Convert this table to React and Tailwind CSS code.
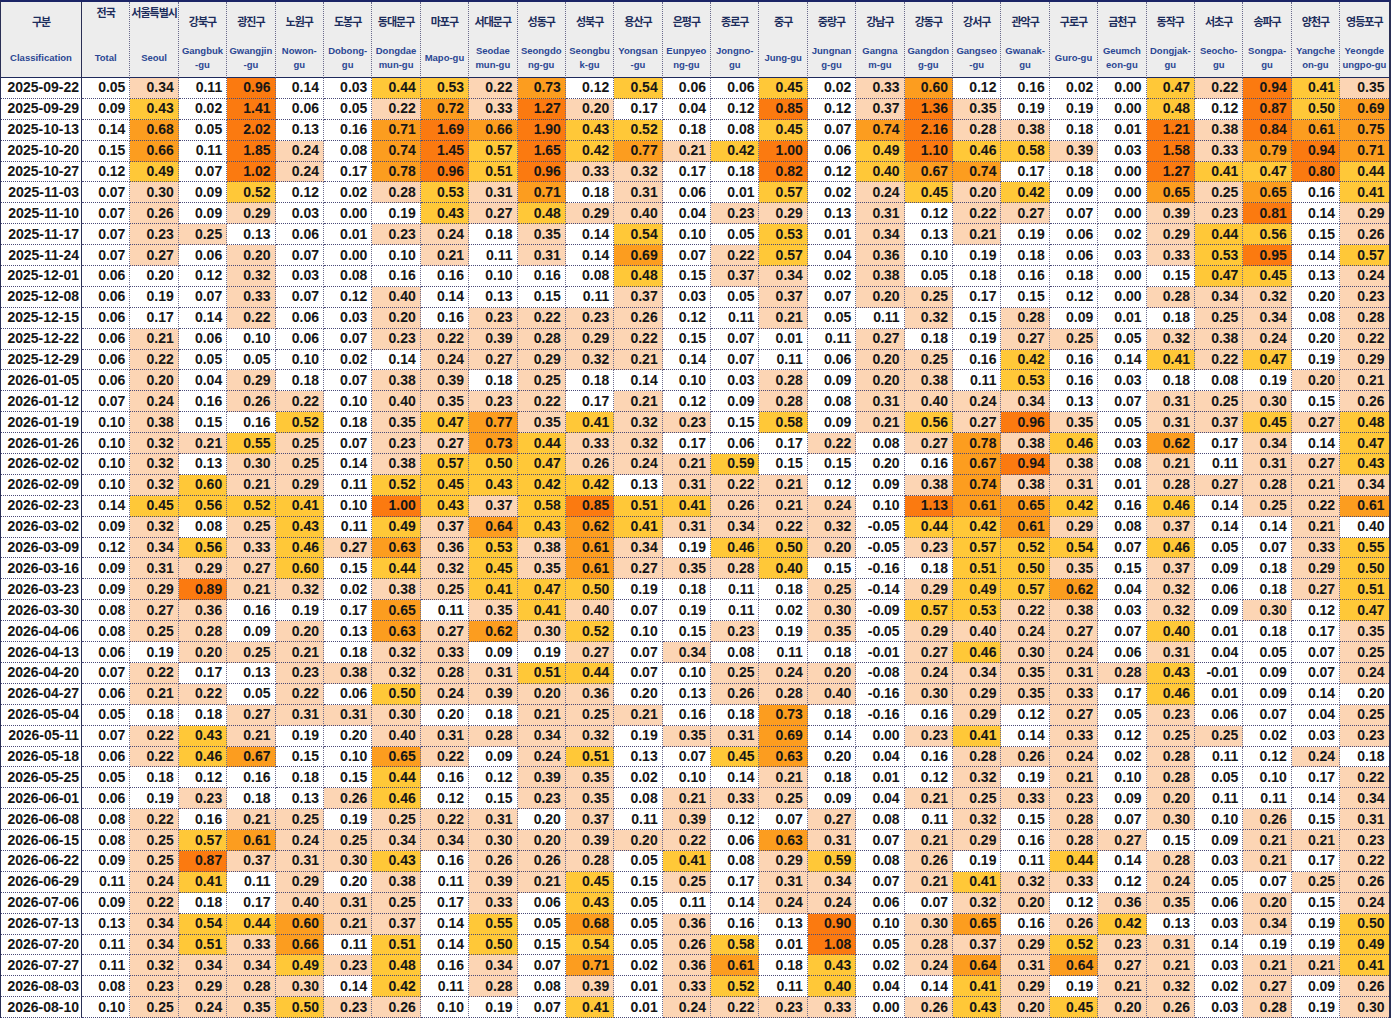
import React from "react";

const HEAD = [
  { ko: "구분", en: ["Classification"] },
  { ko: "전국", en: ["Total"], top: true },
  { ko: "서울특별시", en: ["Seoul"], top: true },
  { ko: "강북구", en: ["Gangbuk", "-gu"] },
  { ko: "광진구", en: ["Gwangjin", "-gu"] },
  { ko: "노원구", en: ["Nowon-", "gu"] },
  { ko: "도봉구", en: ["Dobong-", "gu"] },
  { ko: "동대문구", en: ["Dongdae", "mun-gu"] },
  { ko: "마포구", en: ["Mapo-gu"] },
  { ko: "서대문구", en: ["Seodae", "mun-gu"] },
  { ko: "성동구", en: ["Seongdo", "ng-gu"] },
  { ko: "성북구", en: ["Seongbu", "k-gu"] },
  { ko: "용산구", en: ["Yongsan", "-gu"] },
  { ko: "은평구", en: ["Eunpyeo", "ng-gu"] },
  { ko: "종로구", en: ["Jongno-", "gu"] },
  { ko: "중구", en: ["Jung-gu"] },
  { ko: "중랑구", en: ["Jungnan", "g-gu"] },
  { ko: "강남구", en: ["Gangna", "m-gu"] },
  { ko: "강동구", en: ["Gangdon", "g-gu"] },
  { ko: "강서구", en: ["Gangseo", "-gu"] },
  { ko: "관악구", en: ["Gwanak-", "gu"] },
  { ko: "구로구", en: ["Guro-gu"] },
  { ko: "금천구", en: ["Geumch", "eon-gu"] },
  { ko: "동작구", en: ["Dongjak-", "gu"] },
  { ko: "서초구", en: ["Seocho-", "gu"] },
  { ko: "송파구", en: ["Songpa-", "gu"] },
  { ko: "양천구", en: ["Yangche", "on-gu"] },
  { ko: "영등포구", en: ["Yeongde", "ungpo-gu"] },
];

const RAW = `
2025-09-22 0.05 0.34 0.11 0.96 0.14 0.03 0.44 0.53 0.22 0.73 0.12 0.54 0.06 0.06 0.45 0.02 0.33 0.60 0.12 0.16 0.02 0.00 0.47 0.22 0.94 0.41 0.35
2025-09-29 0.09 0.43 0.02 1.41 0.06 0.05 0.22 0.72 0.33 1.27 0.20 0.17 0.04 0.12 0.85 0.12 0.37 1.36 0.35 0.19 0.19 0.00 0.48 0.12 0.87 0.50 0.69
2025-10-13 0.14 0.68 0.05 2.02 0.13 0.16 0.71 1.69 0.66 1.90 0.43 0.52 0.18 0.08 0.45 0.07 0.74 2.16 0.28 0.38 0.18 0.01 1.21 0.38 0.84 0.61 0.75
2025-10-20 0.15 0.66 0.11 1.85 0.24 0.08 0.74 1.45 0.57 1.65 0.42 0.77 0.21 0.42 1.00 0.06 0.49 1.10 0.46 0.58 0.39 0.03 1.58 0.33 0.79 0.94 0.71
2025-10-27 0.12 0.49 0.07 1.02 0.24 0.17 0.78 0.96 0.51 0.96 0.33 0.32 0.17 0.18 0.82 0.12 0.40 0.67 0.74 0.17 0.18 0.00 1.27 0.41 0.47 0.80 0.44
2025-11-03 0.07 0.30 0.09 0.52 0.12 0.02 0.28 0.53 0.31 0.71 0.18 0.31 0.06 0.01 0.57 0.02 0.24 0.45 0.20 0.42 0.09 0.00 0.65 0.25 0.65 0.16 0.41
2025-11-10 0.07 0.26 0.09 0.29 0.03 0.00 0.19 0.43 0.27 0.48 0.29 0.40 0.04 0.23 0.29 0.13 0.31 0.12 0.22 0.27 0.07 0.00 0.39 0.23 0.81 0.14 0.29
2025-11-17 0.07 0.23 0.25 0.13 0.06 0.01 0.23 0.24 0.18 0.35 0.14 0.54 0.10 0.05 0.53 0.01 0.34 0.13 0.21 0.19 0.06 0.02 0.29 0.44 0.56 0.15 0.26
2025-11-24 0.07 0.27 0.06 0.20 0.07 0.00 0.10 0.21 0.11 0.31 0.14 0.69 0.07 0.22 0.57 0.04 0.36 0.10 0.19 0.18 0.06 0.03 0.33 0.53 0.95 0.14 0.57
2025-12-01 0.06 0.20 0.12 0.32 0.03 0.08 0.16 0.16 0.10 0.16 0.08 0.48 0.15 0.37 0.34 0.02 0.38 0.05 0.18 0.16 0.18 0.00 0.15 0.47 0.45 0.13 0.24
2025-12-08 0.06 0.19 0.07 0.33 0.07 0.12 0.40 0.14 0.13 0.15 0.11 0.37 0.03 0.05 0.37 0.07 0.20 0.25 0.17 0.15 0.12 0.00 0.28 0.34 0.32 0.20 0.23
2025-12-15 0.06 0.17 0.14 0.22 0.06 0.03 0.20 0.16 0.23 0.22 0.23 0.26 0.12 0.11 0.21 0.05 0.11 0.32 0.15 0.28 0.09 0.01 0.18 0.25 0.34 0.08 0.28
2025-12-22 0.06 0.21 0.06 0.10 0.06 0.07 0.23 0.22 0.39 0.28 0.29 0.22 0.15 0.07 0.01 0.11 0.27 0.18 0.19 0.27 0.25 0.05 0.32 0.38 0.24 0.20 0.22
2025-12-29 0.06 0.22 0.05 0.05 0.10 0.02 0.14 0.24 0.27 0.29 0.32 0.21 0.14 0.07 0.11 0.06 0.20 0.25 0.16 0.42 0.16 0.14 0.41 0.22 0.47 0.19 0.29
2026-01-05 0.06 0.20 0.04 0.29 0.18 0.07 0.38 0.39 0.18 0.25 0.18 0.14 0.10 0.03 0.28 0.09 0.20 0.38 0.11 0.53 0.16 0.03 0.18 0.08 0.19 0.20 0.21
2026-01-12 0.07 0.24 0.16 0.26 0.22 0.10 0.40 0.35 0.23 0.22 0.17 0.21 0.12 0.09 0.28 0.08 0.31 0.40 0.24 0.34 0.13 0.07 0.31 0.25 0.30 0.15 0.26
2026-01-19 0.10 0.38 0.15 0.16 0.52 0.18 0.35 0.47 0.77 0.35 0.41 0.32 0.23 0.15 0.58 0.09 0.21 0.56 0.27 0.96 0.35 0.05 0.31 0.37 0.45 0.27 0.48
2026-01-26 0.10 0.32 0.21 0.55 0.25 0.07 0.23 0.27 0.73 0.44 0.33 0.32 0.17 0.06 0.17 0.22 0.08 0.27 0.78 0.38 0.46 0.03 0.62 0.17 0.34 0.14 0.47
2026-02-02 0.10 0.32 0.13 0.30 0.25 0.14 0.38 0.57 0.50 0.47 0.26 0.24 0.21 0.59 0.15 0.15 0.20 0.16 0.67 0.94 0.38 0.08 0.21 0.11 0.31 0.27 0.43
2026-02-09 0.10 0.32 0.60 0.21 0.29 0.11 0.52 0.45 0.43 0.42 0.42 0.13 0.31 0.22 0.21 0.12 0.09 0.38 0.74 0.38 0.31 0.01 0.28 0.27 0.28 0.21 0.34
2026-02-23 0.14 0.45 0.56 0.52 0.41 0.10 1.00 0.43 0.37 0.58 0.85 0.51 0.41 0.26 0.21 0.24 0.10 1.13 0.61 0.65 0.42 0.16 0.46 0.14 0.25 0.22 0.61
2026-03-02 0.09 0.32 0.08 0.25 0.43 0.11 0.49 0.37 0.64 0.43 0.62 0.41 0.31 0.34 0.22 0.32 -0.05 0.44 0.42 0.61 0.29 0.08 0.37 0.14 0.14 0.21 0.40
2026-03-09 0.12 0.34 0.56 0.33 0.46 0.27 0.63 0.36 0.53 0.38 0.61 0.34 0.19 0.46 0.50 0.20 -0.05 0.23 0.57 0.52 0.54 0.07 0.46 0.05 0.07 0.33 0.55
2026-03-16 0.09 0.31 0.29 0.27 0.60 0.15 0.44 0.32 0.45 0.35 0.61 0.27 0.35 0.28 0.40 0.15 -0.16 0.18 0.51 0.50 0.35 0.15 0.37 0.09 0.18 0.29 0.50
2026-03-23 0.09 0.29 0.89 0.21 0.32 0.02 0.38 0.25 0.41 0.47 0.50 0.19 0.18 0.11 0.18 0.25 -0.14 0.29 0.49 0.57 0.62 0.04 0.32 0.06 0.18 0.27 0.51
2026-03-30 0.08 0.27 0.36 0.16 0.19 0.17 0.65 0.11 0.35 0.41 0.40 0.07 0.19 0.11 0.02 0.30 -0.09 0.57 0.53 0.22 0.38 0.03 0.32 0.09 0.30 0.12 0.47
2026-04-06 0.08 0.25 0.28 0.09 0.20 0.13 0.63 0.27 0.62 0.30 0.52 0.10 0.15 0.23 0.19 0.35 -0.05 0.29 0.40 0.24 0.27 0.07 0.40 0.01 0.18 0.17 0.35
2026-04-13 0.06 0.19 0.20 0.25 0.21 0.18 0.32 0.33 0.09 0.19 0.27 0.07 0.34 0.08 0.11 0.18 -0.01 0.27 0.46 0.30 0.24 0.06 0.31 0.04 0.05 0.07 0.25
2026-04-20 0.07 0.22 0.17 0.13 0.23 0.38 0.32 0.28 0.31 0.51 0.44 0.07 0.10 0.25 0.24 0.20 -0.08 0.24 0.34 0.35 0.31 0.28 0.43 -0.01 0.09 0.07 0.24
2026-04-27 0.06 0.21 0.22 0.05 0.22 0.06 0.50 0.24 0.39 0.20 0.36 0.20 0.13 0.26 0.28 0.40 -0.16 0.30 0.29 0.35 0.33 0.17 0.46 0.01 0.09 0.14 0.20
2026-05-04 0.05 0.18 0.18 0.27 0.31 0.31 0.30 0.20 0.18 0.21 0.25 0.21 0.16 0.18 0.73 0.18 -0.16 0.16 0.29 0.12 0.27 0.05 0.23 0.06 0.07 0.04 0.25
2026-05-11 0.07 0.22 0.43 0.21 0.19 0.20 0.40 0.31 0.28 0.34 0.32 0.19 0.35 0.31 0.69 0.14 0.00 0.23 0.41 0.14 0.33 0.12 0.25 0.25 0.02 0.03 0.23
2026-05-18 0.06 0.22 0.46 0.67 0.15 0.10 0.65 0.22 0.09 0.24 0.51 0.13 0.07 0.45 0.63 0.20 0.04 0.16 0.28 0.26 0.24 0.02 0.28 0.11 0.12 0.24 0.18
2026-05-25 0.05 0.18 0.12 0.16 0.18 0.15 0.44 0.16 0.12 0.39 0.35 0.02 0.10 0.14 0.21 0.18 0.01 0.12 0.32 0.19 0.21 0.10 0.28 0.05 0.10 0.17 0.22
2026-06-01 0.06 0.19 0.23 0.18 0.13 0.26 0.46 0.12 0.15 0.23 0.35 0.08 0.21 0.33 0.25 0.09 0.04 0.21 0.25 0.33 0.23 0.09 0.20 0.11 0.11 0.14 0.34
2026-06-08 0.08 0.22 0.16 0.21 0.25 0.19 0.25 0.22 0.31 0.20 0.37 0.11 0.39 0.12 0.07 0.27 0.08 0.11 0.32 0.15 0.28 0.07 0.30 0.10 0.26 0.15 0.31
2026-06-15 0.08 0.25 0.57 0.61 0.24 0.25 0.34 0.34 0.30 0.20 0.39 0.20 0.22 0.06 0.63 0.31 0.07 0.21 0.29 0.16 0.28 0.27 0.15 0.09 0.21 0.21 0.23
2026-06-22 0.09 0.25 0.87 0.37 0.31 0.30 0.43 0.16 0.26 0.26 0.28 0.05 0.41 0.08 0.29 0.59 0.08 0.26 0.19 0.11 0.44 0.14 0.28 0.03 0.21 0.17 0.22
2026-06-29 0.11 0.24 0.41 0.11 0.29 0.20 0.38 0.11 0.39 0.21 0.45 0.15 0.25 0.17 0.31 0.34 0.07 0.21 0.41 0.32 0.33 0.12 0.24 0.05 0.07 0.25 0.26
2026-07-06 0.09 0.22 0.18 0.17 0.40 0.31 0.25 0.17 0.33 0.06 0.43 0.05 0.11 0.14 0.24 0.24 0.06 0.07 0.32 0.20 0.12 0.36 0.35 0.06 0.20 0.15 0.24
2026-07-13 0.13 0.34 0.54 0.44 0.60 0.21 0.37 0.14 0.55 0.05 0.68 0.05 0.36 0.16 0.13 0.90 0.10 0.30 0.65 0.16 0.26 0.42 0.13 0.03 0.34 0.19 0.50
2026-07-20 0.11 0.34 0.51 0.33 0.66 0.11 0.51 0.14 0.50 0.15 0.54 0.05 0.26 0.58 0.01 1.08 0.05 0.28 0.37 0.29 0.52 0.23 0.31 0.14 0.19 0.19 0.49
2026-07-27 0.11 0.32 0.34 0.34 0.49 0.23 0.48 0.16 0.34 0.07 0.71 0.02 0.36 0.61 0.18 0.43 0.02 0.24 0.64 0.31 0.64 0.27 0.21 0.03 0.21 0.21 0.41
2026-08-03 0.08 0.23 0.29 0.28 0.30 0.14 0.42 0.11 0.28 0.08 0.39 0.01 0.33 0.52 0.11 0.40 0.04 0.14 0.41 0.29 0.19 0.21 0.32 0.02 0.27 0.09 0.26
2026-08-10 0.10 0.25 0.24 0.35 0.50 0.23 0.26 0.10 0.19 0.07 0.41 0.01 0.24 0.22 0.23 0.33 0.00 0.26 0.43 0.20 0.45 0.20 0.26 0.03 0.28 0.19 0.30
`;

const ROWS = RAW.trim()
  .split("\n")
  .map((line) => {
    const p = line.trim().split(/\s+/);
    return { date: p[0], vals: p.slice(1) };
  });

const OVERRIDES = {
  "9-1": 0,
  "10-25": 0,
  "12-25": 0,
  "18-16": 0,
  "29-11": 0,
  "29-26": 0,
  "30-7": 0,
  "31-5": 0,
  "32-15": 0,
  "35-9": 0,
  "38-5": 0,
  "21-26": 0,
  "4-16": 2,
  "23-14": 2,
  "26-22": 2,
  "43-15": 2,
  "0-17": 3,
  "40-4": 3,
};

const BG = [
  "bg-white",
  "bg-[#fcd5b4]",
  "bg-[#ffc838]",
  "bg-[#fc9d1f]",
  "bg-[#fb7a10]",
];

function level(r, c, s) {
  const key = `${r}-${c}`;
  if (key in OVERRIDES) return OVERRIDES[key];
  const v = parseFloat(s);
  if (v >= 0.8) return 4;
  if (v > 0.6) return 3;
  if (v > 0.4) return 2;
  if (v >= 0.2) return 1;
  return 0;
}

const NUM_FONT = { fontFamily: "'Liberation Sans', Arial, sans-serif" };

function HeaderCell({ h, idx }) {
  const first = idx === 0;
  const last = idx === HEAD.length - 1;
  return (
    <div
      className={
        "h-[76px] flex flex-col overflow-hidden bg-[#ededed] border-b border-b-[#1f2a5c] " +
        (first
          ? "border-r border-r-[#2a2f55]"
          : last
          ? ""
          : "border-r border-r-[#6a6a8c] [border-right-style:dotted]")
      }
    >
      <div
        className={
          "h-[38px] flex justify-center " +
          (h.top ? "items-start pt-[2px]" : "items-center")
        }
      >
        <span
          className="text-[11px] leading-[16px] font-bold tracking-[-1px] text-[#1d2d5c] whitespace-nowrap"
          style={{ fontFamily: "'Noto Sans CJK KR', sans-serif" }}
        >
          {h.ko}
        </span>
      </div>
      <div
        className="flex-1 flex flex-col items-center justify-center pb-[1px] text-[9.5px] leading-[14px] font-bold text-[#2b4793] whitespace-nowrap"
        style={NUM_FONT}
      >
        {h.en.map((t, i) => (
          <span key={i}>{t}</span>
        ))}
      </div>
    </div>
  );
}

export default function App() {
  return (
    <div className="w-[1393px] h-[1021px] bg-white overflow-hidden">
      <div className="inline-grid grid-cols-[81px_repeat(27,48.4px)] border-t-2 border-t-[#1b2466] border-l border-l-[#2a2f55] border-r-2 border-r-[#2a2f55]">
        {HEAD.map((h, i) => (
          <HeaderCell key={i} h={h} idx={i} />
        ))}
        {ROWS.map((row, r) => (
          <React.Fragment key={row.date}>
            <div
              className="h-[20.9px] flex items-center justify-end pr-[2px] border-r border-r-[#2a2f55] border-b border-b-[#4a4a78] [border-bottom-style:dotted] text-[14px] font-bold text-[#161616] bg-white"
              style={NUM_FONT}
            >
              {row.date}
            </div>
            {row.vals.map((v, c) => {
              const lv = level(r, c, v);
              const last = c === row.vals.length - 1;
              return (
                <div
                  key={c}
                  className={
                    "h-[20.9px] flex items-center justify-end pr-[4px] border-b border-b-[#4a4a78] [border-bottom-style:dotted] text-[14px] font-bold text-[#161616] " +
                    BG[lv] +
                    (last
                      ? ""
                      : " border-r border-r-[#6a6a8c] [border-right-style:dotted]")
                  }
                  style={NUM_FONT}
                >
                  {v}
                </div>
              );
            })}
          </React.Fragment>
        ))}
      </div>
    </div>
  );
}
